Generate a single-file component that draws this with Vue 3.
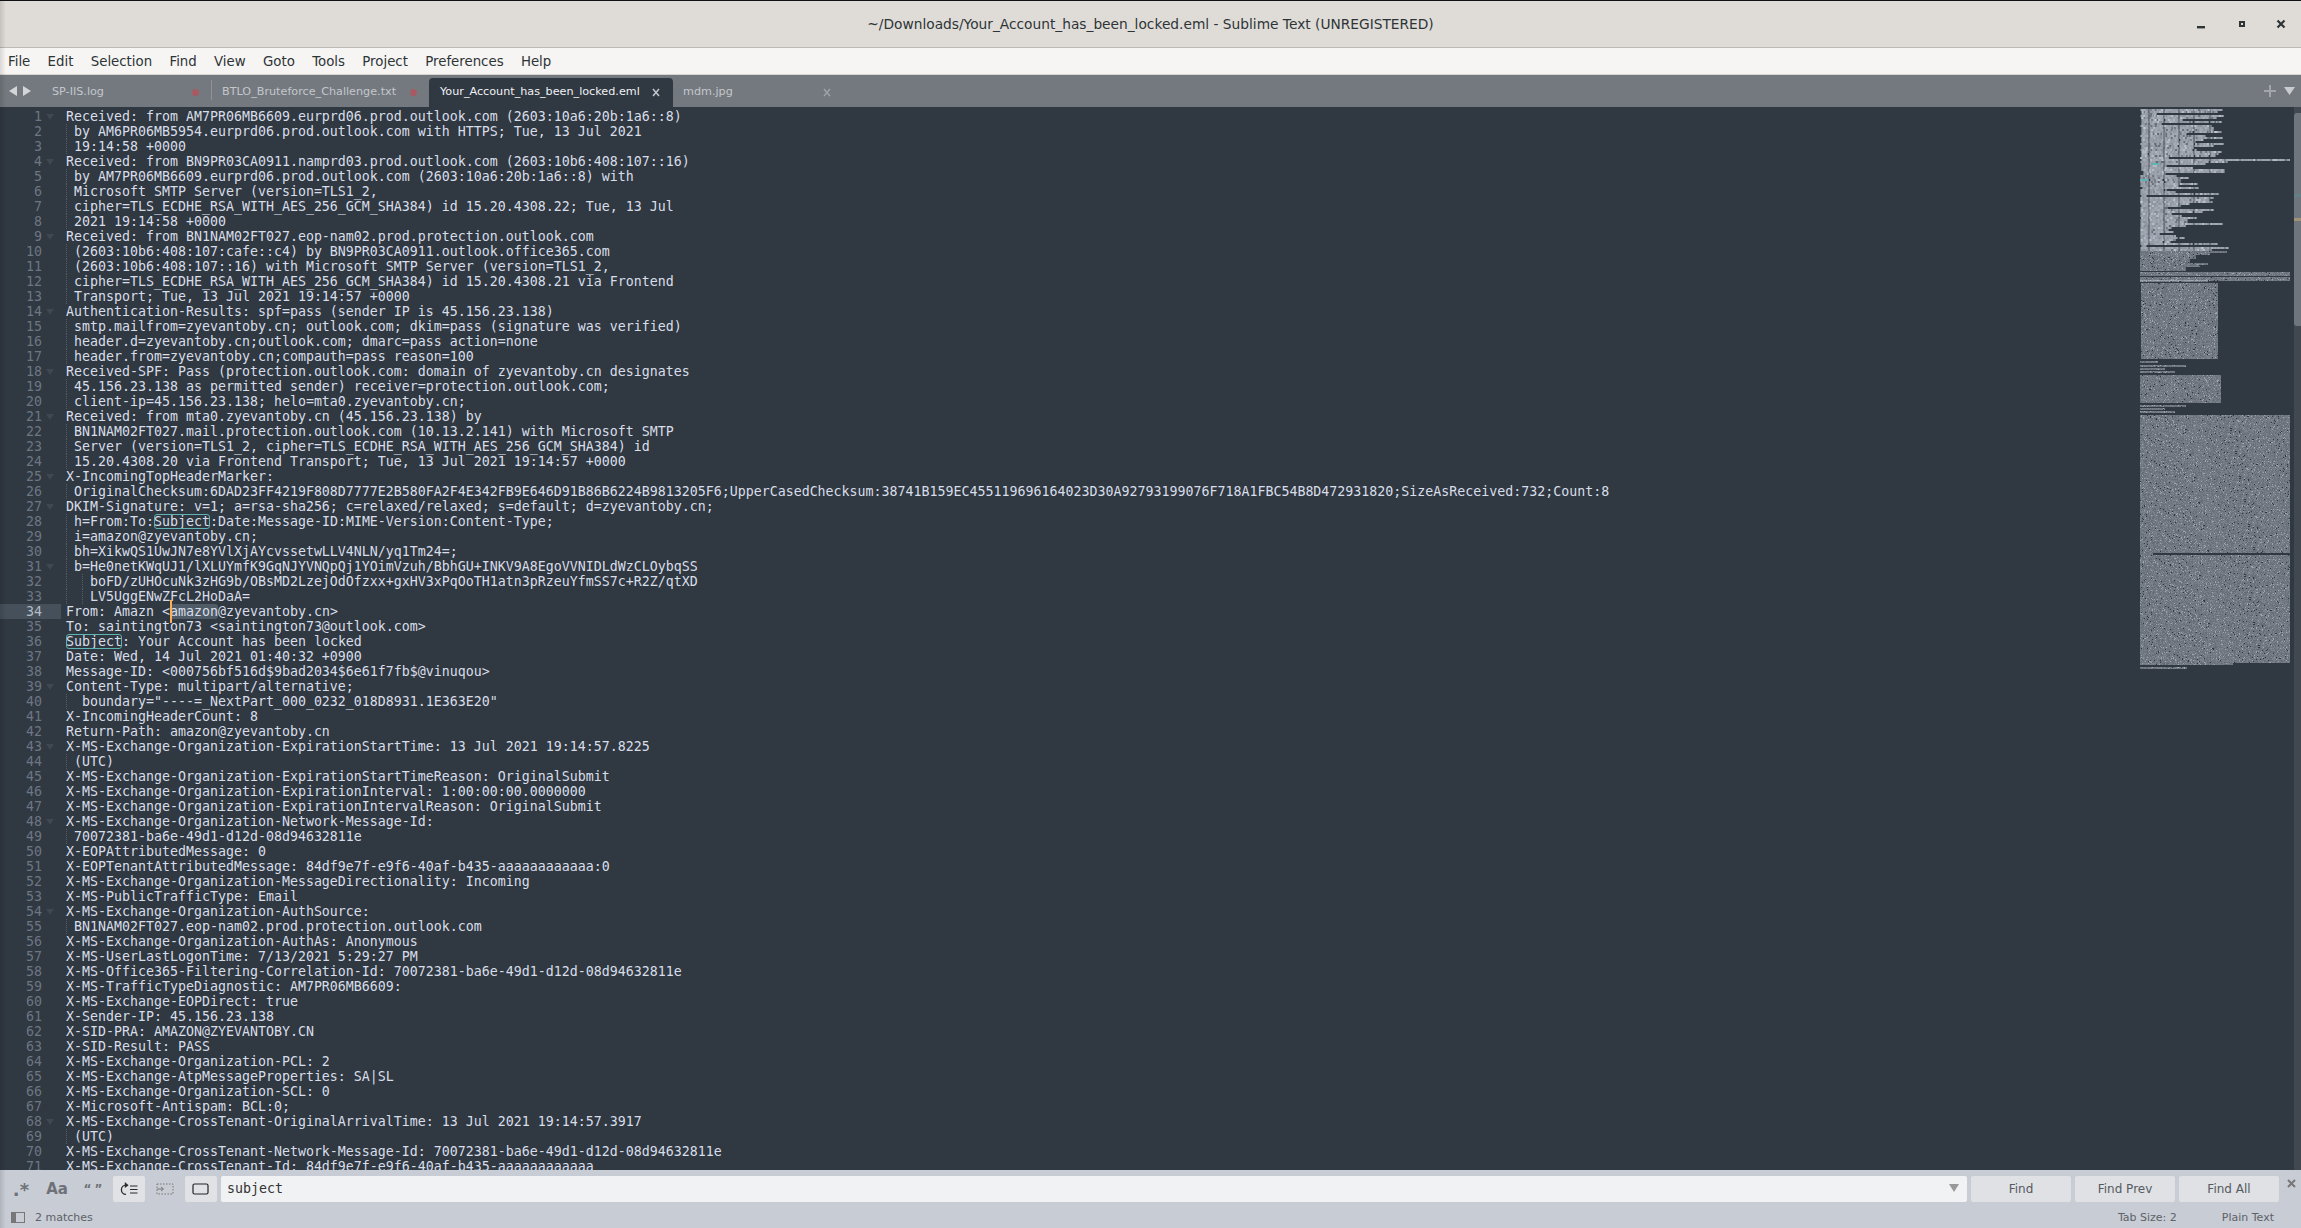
<script setup>
import { ref, onMounted } from 'vue'

const menus = ['File', 'Edit', 'Selection', 'Find', 'View', 'Goto', 'Tools', 'Project', 'Preferences', 'Help']

const tabs = [
  { name: 'SP-IIS.log', cls: 't1', dirty: true },
  { name: 'BTLO_Bruteforce_Challenge.txt', cls: 't2', dirty: true },
  { name: 'Your_Account_has_been_locked.eml', cls: 't3 active', dirty: false },
  { name: 'mdm.jpg', cls: 't4', dirty: false }
]

const raw = `Received: from AM7PR06MB6609.eurprd06.prod.outlook.com (2603:10a6:20b:1a6::8)
 by AM6PR06MB5954.eurprd06.prod.outlook.com with HTTPS; Tue, 13 Jul 2021
 19:14:58 +0000
Received: from BN9PR03CA0911.namprd03.prod.outlook.com (2603:10b6:408:107::16)
 by AM7PR06MB6609.eurprd06.prod.outlook.com (2603:10a6:20b:1a6::8) with
 Microsoft SMTP Server (version=TLS1_2,
 cipher=TLS_ECDHE_RSA_WITH_AES_256_GCM_SHA384) id 15.20.4308.22; Tue, 13 Jul
 2021 19:14:58 +0000
Received: from BN1NAM02FT027.eop-nam02.prod.protection.outlook.com
 (2603:10b6:408:107:cafe::c4) by BN9PR03CA0911.outlook.office365.com
 (2603:10b6:408:107::16) with Microsoft SMTP Server (version=TLS1_2,
 cipher=TLS_ECDHE_RSA_WITH_AES_256_GCM_SHA384) id 15.20.4308.21 via Frontend
 Transport; Tue, 13 Jul 2021 19:14:57 +0000
Authentication-Results: spf=pass (sender IP is 45.156.23.138)
 smtp.mailfrom=zyevantoby.cn; outlook.com; dkim=pass (signature was verified)
 header.d=zyevantoby.cn;outlook.com; dmarc=pass action=none
 header.from=zyevantoby.cn;compauth=pass reason=100
Received-SPF: Pass (protection.outlook.com: domain of zyevantoby.cn designates
 45.156.23.138 as permitted sender) receiver=protection.outlook.com;
 client-ip=45.156.23.138; helo=mta0.zyevantoby.cn;
Received: from mta0.zyevantoby.cn (45.156.23.138) by
 BN1NAM02FT027.mail.protection.outlook.com (10.13.2.141) with Microsoft SMTP
 Server (version=TLS1_2, cipher=TLS_ECDHE_RSA_WITH_AES_256_GCM_SHA384) id
 15.20.4308.20 via Frontend Transport; Tue, 13 Jul 2021 19:14:57 +0000
X-IncomingTopHeaderMarker:
 OriginalChecksum:6DAD23FF4219F808D7777E2B580FA2F4E342FB9E646D91B86B6224B9813205F6;UpperCasedChecksum:38741B159EC455119696164023D30A92793199076F718A1FBC54B8D472931820;SizeAsReceived:732;Count:8
DKIM-Signature: v=1; a=rsa-sha256; c=relaxed/relaxed; s=default; d=zyevantoby.cn;
 h=From:To:Subject:Date:Message-ID:MIME-Version:Content-Type;
 i=amazon@zyevantoby.cn;
 bh=XikwQS1UwJN7e8YVlXjAYcvssetwLLV4NLN/yq1Tm24=;
 b=He0netKWqUJ1/lXLUYmfK9GqNJYVNQpQj1YOimVzuh/BbhGU+INKV9A8EgoVVNIDLdWzCLOybqSS
   boFD/zUHOcuNk3zHG9b/OBsMD2LzejOdOfzxx+gxHV3xPqOoTH1atn3pRzeuYfmSS7c+R2Z/qtXD
   LV5UggENwZFcL2HoDaA=
From: Amazn <amazon@zyevantoby.cn>
To: saintington73 <saintington73@outlook.com>
Subject: Your Account has been locked
Date: Wed, 14 Jul 2021 01:40:32 +0900
Message-ID: <000756bf516d$9bad2034$6e61f7fb$@vinuqou>
Content-Type: multipart/alternative;
  boundary="----=_NextPart_000_0232_018D8931.1E363E20"
X-IncomingHeaderCount: 8
Return-Path: amazon@zyevantoby.cn
X-MS-Exchange-Organization-ExpirationStartTime: 13 Jul 2021 19:14:57.8225
 (UTC)
X-MS-Exchange-Organization-ExpirationStartTimeReason: OriginalSubmit
X-MS-Exchange-Organization-ExpirationInterval: 1:00:00:00.0000000
X-MS-Exchange-Organization-ExpirationIntervalReason: OriginalSubmit
X-MS-Exchange-Organization-Network-Message-Id:
 70072381-ba6e-49d1-d12d-08d94632811e
X-EOPAttributedMessage: 0
X-EOPTenantAttributedMessage: 84df9e7f-e9f6-40af-b435-aaaaaaaaaaaa:0
X-MS-Exchange-Organization-MessageDirectionality: Incoming
X-MS-PublicTrafficType: Email
X-MS-Exchange-Organization-AuthSource:
 BN1NAM02FT027.eop-nam02.prod.protection.outlook.com
X-MS-Exchange-Organization-AuthAs: Anonymous
X-MS-UserLastLogonTime: 7/13/2021 5:29:27 PM
X-MS-Office365-Filtering-Correlation-Id: 70072381-ba6e-49d1-d12d-08d94632811e
X-MS-TrafficTypeDiagnostic: AM7PR06MB6609:
X-MS-Exchange-EOPDirect: true
X-Sender-IP: 45.156.23.138
X-SID-PRA: AMAZON@ZYEVANTOBY.CN
X-SID-Result: PASS
X-MS-Exchange-Organization-PCL: 2
X-MS-Exchange-AtpMessageProperties: SA|SL
X-MS-Exchange-Organization-SCL: 0
X-Microsoft-Antispam: BCL:0;
X-MS-Exchange-CrossTenant-OriginalArrivalTime: 13 Jul 2021 19:14:57.3917
 (UTC)
X-MS-Exchange-CrossTenant-Network-Message-Id: 70072381-ba6e-49d1-d12d-08d94632811e
X-MS-Exchange-CrossTenant-Id: 84df9e7f-e9f6-40af-b435-aaaaaaaaaaaa`.split('\n')

const folds = new Set([1, 4, 9, 14, 18, 21, 25, 27, 31, 39, 43, 48, 54, 68])
const marks = {
  28: [11, 7, 'found'],
  34: [13, 6, 'sel'],
  36: [0, 7, 'found']
}

const lines = raw.map((text, i) => {
  const n = i + 1
  const m = marks[n]
  const indent = text.match(/^ */)[0].length
  const parts = m
    ? [
        { t: text.slice(0, m[0]), c: '' },
        { t: text.slice(m[0], m[0] + m[1]), c: m[2] },
        { t: text.slice(m[0] + m[1]), c: '' }
      ]
    : [{ t: text, c: '' }]
  return { n, parts, fold: folds.has(n), guide: indent > 0, guide2: indent > 2 }
})

const mini = ref(null)

onMounted(() => {
  const g = mini.value.getContext('2d')
  let seed = 12345
  const rnd = () => {
    seed = (seed * 1103515245 + 12345) & 0x7fffffff
    return seed / 0x7fffffff
  }
  const tone = () => {
    const r = rnd()
    const a = r > 0.95 ? 0.66 : 0.3 + rnd() * 0.18
    return `rgba(216,222,233,${a.toFixed(2)})`
  }
  const TOP = 109
  const MAX = 150

  // real lines of the document, one pixel column per character
  raw.forEach((text, i) => {
    for (let c = 0; c < text.length; c++) {
      if (text[c] === ' ') continue
      const x = Math.round(c * 1.07)
      if (x >= MAX) break
      g.fillStyle = tone()
      g.fillRect(x, i * 2, 2, 2)
    }
  })

  // rows of the part of the file below the viewport; y is in page pixels
  const row = (y, from, to) => {
    for (let x = from; x < to; x++) {
      for (let k = 0; k < 2; k++) {
        if (rnd() > 0.97) continue
        g.fillStyle = tone()
        g.fillRect(x, y - TOP + k, 1, 1)
      }
    }
  }
  const block = (top, bottom, from, to) => {
    for (let y = top; y < bottom; y += 2) row(y, from, to)
  }
  const widths = [87, 70, 56, 56, 50, 50, 68, 60, 46, 46]
  widths.forEach((w, i) => row(251 + i * 2, 0, w))
  block(272, 276, 0, 150)
  block(277, 280, 0, 150)
  row(280, 0, 68)
  block(283, 359, 1, 78)
  row(361, 0, 18)
  row(365, 0, 46)
  row(368, 0, 25)
  row(371, 0, 35)
  block(375, 403, 0, 81)
  row(405, 0, 46)
  row(408, 0, 25)
  row(411, 0, 35)
  block(415, 553, 0, 150)
  row(553, 0, 13)
  block(555, 663, 0, 150)
  row(663, 0, 93)
  row(667, 0, 47)

  // search matches
  g.fillStyle = '#5fb3b3'
  g.fillRect(12, 54, 7, 2)
  g.fillRect(0, 70, 8, 2)
})
</script>

<template>
  <div class="window">
    <header class="titlebar">
      <div class="title">~/Downloads/Your_Account_has_been_locked.eml - Sublime Text (UNREGISTERED)</div>
      <div class="winbtns">
        <svg class="wb" width="40" height="20" viewBox="0 0 40 20"><rect x="16" y="12" width="8" height="2.4" fill="#2e3436" /></svg>
        <svg class="wb" width="40" height="20" viewBox="0 0 40 20"><path d="M18 7h6v6h-6zM20 9v2h2V9z" fill="#2e3436" fill-rule="evenodd" /></svg>
        <svg class="wb" width="40" height="20" viewBox="0 0 40 20"><path d="M16.5 6.5l7 7M23.5 6.5l-7 7" stroke="#2e3436" stroke-width="2.2" fill="none" /></svg>
      </div>
    </header>

    <nav class="menubar">
      <span v-for="m in menus" :key="m" class="menu">{{ m }}</span>
    </nav>

    <div class="tabbar">
      <div class="arrows">
        <svg width="8" height="10" viewBox="0 0 8 10"><path d="M8 0v10L0 5z" fill="#d3d5d8" /></svg>
        <svg width="8" height="10" viewBox="0 0 8 10"><path d="M0 0v10l8-5z" fill="#d3d5d8" /></svg>
      </div>
      <div v-for="t in tabs" :key="t.name" class="tab" :class="t.cls">
        <span class="tabname">{{ t.name }}</span>
        <span v-if="t.dirty" class="dot"></span>
        <svg v-else class="tabx" width="8" height="9" viewBox="0 0 8 9"><path d="M1 1l6 7M7 1L1 8" stroke="currentColor" stroke-width="1.5" fill="none" /></svg>
      </div>
      <div class="tabtools">
        <svg width="12" height="12" viewBox="0 0 12 12"><path d="M5 0h2v5h5v2H7v5H5V7H0V5h5z" fill="#a2a5a9" /></svg>
        <svg width="11" height="8" viewBox="0 0 11 8"><path d="M0 0h11L5.5 8z" fill="#c9cbce" /></svg>
      </div>
    </div>

    <main class="editor">
      <div class="code">
        <div v-for="l in lines" :key="l.n" class="line" :class="{ current: l.n === 34 }">
          <div class="gutter">
            <span class="num">{{ l.n }}</span>
            <span class="foldcell"><svg v-if="l.fold" width="8" height="6" viewBox="0 0 8 6"><path d="M0 0h8L4 6z" fill="#3f4852" /></svg></span>
          </div>
          <div class="text" :class="{ guide: l.guide, guide2: l.guide2 }">
            <span v-for="(p, i) in l.parts" :key="i" :class="p.c">{{ p.t }}</span>
            <i v-if="l.n === 34" class="caret"></i>
          </div>
        </div>
      </div>
      <canvas ref="mini" class="minimap" width="150" height="570"></canvas>
      <div class="scrolltrack">
        <div class="thumb"></div>
        <i class="tick teal"></i>
        <i class="tick tan"></i>
      </div>
    </main>

    <section class="findbar">
      <div class="toggle regex">.*</div>
      <div class="toggle case">Aa</div>
      <div class="toggle quotes">“ ”</div>
      <div class="toggle on">
        <svg width="18" height="14" viewBox="0 0 18 14"><path d="M6 3.2A4.6 4.6 0 0 0 6 12.4" stroke="#2a2a2a" stroke-width="1.3" fill="none" /><path d="M4.8 0l3.8 3.2L4.8 6z" fill="#2a2a2a" /><path d="M10 4h7.5M10 7.5h7.5M10 11h7.5" stroke="#2a2a2a" stroke-width="1.2" /></svg>
      </div>
      <div class="toggle">
        <svg width="18" height="12" viewBox="0 0 18 12"><rect x="1" y="1" width="16" height="10" fill="none" stroke="#777" stroke-dasharray="1.5 1.5" /><path d="M1 6h6M5 4l2.5 2L5 8" fill="none" stroke="#777" /></svg>
      </div>
      <div class="toggle on">
        <svg width="18" height="12" viewBox="0 0 18 12"><rect x="1" y="1" width="15" height="10" rx="1.5" fill="none" stroke="#222" stroke-width="1.2" /></svg>
      </div>
      <div class="input">
        <span>subject</span>
        <svg width="10" height="8" viewBox="0 0 10 8"><path d="M0 0h10L5 8z" fill="#999" /></svg>
      </div>
      <button class="fbtn">Find</button>
      <button class="fbtn">Find Prev</button>
      <button class="fbtn">Find All</button>
      <svg class="fclose" width="9" height="9" viewBox="0 0 9 9"><path d="M1 1l7 7M8 1L1 8" stroke="#777" stroke-width="2" fill="none" /></svg>
    </section>

    <footer class="statusbar">
      <svg width="14" height="11" viewBox="0 0 14 11"><rect x="0.5" y="0.5" width="13" height="10" fill="none" stroke="#777" /><rect x="0" y="0" width="5" height="11" fill="#777" /></svg>
      <span class="matches">2 matches</span>
      <span class="stat tabsize">Tab Size: 2</span>
      <span class="stat syntax">Plain Text</span>
    </footer>

    <div class="edge"></div>
  </div>
</template>

<style>
html, body { margin: 0; background: #303841; overflow: hidden; }
</style>

<style scoped>
.window {
  position: relative;
  width: 2301px;
  height: 1228px;
  display: flex;
  flex-direction: column;
  overflow: hidden;
  font-family: "DejaVu Sans", sans-serif;
  background: #303841;
}
.titlebar {
  height: 46px;
  flex: none;
  display: flex;
  align-items: center;
  justify-content: center;
  position: relative;
  background: #dfdcd8;
  border-top: 1px solid #111;
  border-bottom: 1px solid #bdb9b3;
}
.title { font-size: 13.75px; color: #2e3436; margin-top: -1px; }
.winbtns { position: absolute; right: 0; top: 13px; display: flex; }
.wb { display: block; }
.menubar {
  height: 27px;
  flex: none;
  box-sizing: border-box;
  display: flex;
  align-items: center;
  gap: 17.3px;
  padding: 0 0 0 8px;
  background: #f6f5f4;
  border-bottom: 1px solid #d8d5d1;
  font-size: 13.33px;
  color: #2e3436;
}
.tabbar {
  height: 32px;
  flex: none;
  display: flex;
  align-items: flex-end;
  background: #74797f;
  font-size: 11.2px;
}
.arrows { width: 41px; height: 32px; display: flex; align-items: center; gap: 6px; padding-left: 9px; box-sizing: border-box; }
.tab {
  height: 29px;
  box-sizing: border-box;
  display: flex;
  align-items: center;
  justify-content: space-between;
  padding: 0 12px 0 11px;
  color: #c3c7cb;
}
.tabname { margin-top: -2px; }
.t1 { width: 170px; }
.t2 { width: 218px; position: relative; }
.t2::before { content: ""; position: absolute; left: 0; top: 2px; height: 20px; width: 1px; background: #8f9398; }
.t3 { width: 244px; padding-right: 13px; }
.t4 { width: 165px; padding: 0 7px 0 10px; }
.active { background: #303841; border-radius: 4px 4px 0 0; color: #f0f2f4; }
.dot { width: 7px; height: 7px; border-radius: 50%; background: #a85a62; }
.tabx { color: #9ea2a6; }
.active .tabx { color: #c5c9ce; }
.tabtools { margin-left: auto; height: 32px; display: flex; align-items: center; gap: 8px; padding-right: 6px; }
.editor { flex: 1; display: flex; min-height: 0; background: #303841; }
.code { flex: 1; min-width: 0; padding-top: 2px; overflow: hidden; }
.line {
  display: flex;
  height: 15px;
  line-height: 15px;
  font-family: "DejaVu Sans Mono", monospace;
  font-size: 13.29px;
  white-space: pre;
}
.gutter { width: 61px; flex: none; display: flex; color: #6d7683; margin-right: 5px; }
.current .gutter { background: #45505b; color: #b4bcc6; }
.num { width: 42px; text-align: right; }
.foldcell { flex: 1; display: flex; align-items: center; padding-left: 4px; }
.foldcell svg { display: block; }
.text { position: relative; color: #d8dee9; }
.guide::before {
  content: "";
  position: absolute;
  left: 0;
  top: 0;
  bottom: 0;
  width: 1px;
  background: repeating-linear-gradient(to bottom, #545d67 0 1px, transparent 1px 2px);
}
.guide2::after {
  content: "";
  position: absolute;
  left: 16px;
  top: 0;
  bottom: 0;
  width: 1px;
  background: repeating-linear-gradient(to bottom, #545d67 0 1px, transparent 1px 2px);
}
.found { outline: 1px solid #5fb3b3; outline-offset: -1px; border-radius: 3px; }
.sel { background: #4f5b66; border-radius: 3px; }
.caret { position: absolute; left: 104px; top: -4px; width: 2px; height: 23px; background: #f9ae58; }
.minimap { flex: none; width: 150px; height: 570px; margin: 2px 4px 0 0; display: block; }
.scrolltrack { width: 7px; flex: none; position: relative; background: #41484f; }
.thumb { position: absolute; left: 0; right: 0; top: 6px; height: 213px; background: #6f757c; border-radius: 3px 0 0 3px; }
.tick { position: absolute; left: 0; right: 0; height: 3px; }
.teal { top: 87px; background: #647f85; }
.tan { top: 111px; background: #a09278; }
.findbar {
  height: 36px;
  flex: none;
  box-sizing: border-box;
  display: flex;
  align-items: flex-start;
  gap: 4px;
  padding: 6px 0 0 5px;
  background: #c8ccd4;
}
.toggle {
  width: 32px;
  height: 26px;
  flex: none;
  border-radius: 2px;
  display: flex;
  align-items: center;
  justify-content: center;
  color: #6e7278;
  font-weight: bold;
}
.toggle.on { background: #e0e2e6; }
.regex { font-size: 18px; }
.case { font-size: 15px; }
.quotes { font-size: 12px; white-space: pre; word-spacing: -1px; }
.input {
  width: 1746px;
  height: 26px;
  flex: none;
  box-sizing: border-box;
  display: flex;
  align-items: center;
  justify-content: space-between;
  padding: 0 8px 2px 6px;
  background: #f1f2f3;
  border-radius: 2px;
  font-family: "DejaVu Sans Mono", monospace;
  font-size: 13.29px;
  color: #333;
}
.fbtn {
  width: 100px;
  height: 26px;
  flex: none;
  padding: 0;
  border: 0;
  border-radius: 2px;
  background: #dfe1e5;
  color: #555a60;
  font-family: "DejaVu Sans", sans-serif;
  font-size: 12px;
}
.fclose { margin: 3px 0 0 4px; flex: none; }
.statusbar {
  height: 22px;
  flex: none;
  display: flex;
  align-items: center;
  padding: 0 27px 0 11px;
  box-sizing: border-box;
  background: #c8ccd4;
  color: #5d6168;
  font-size: 11px;
}
.matches { margin-left: 10px; }
.tabsize { margin-left: auto; }
.syntax { margin-left: 45px; }
.edge {
  position: absolute;
  left: 0;
  top: 0;
  bottom: 0;
  width: 6px;
  pointer-events: none;
  background: linear-gradient(to right, rgba(0, 0, 0, 0.12), rgba(0, 0, 0, 0));
}
</style>
